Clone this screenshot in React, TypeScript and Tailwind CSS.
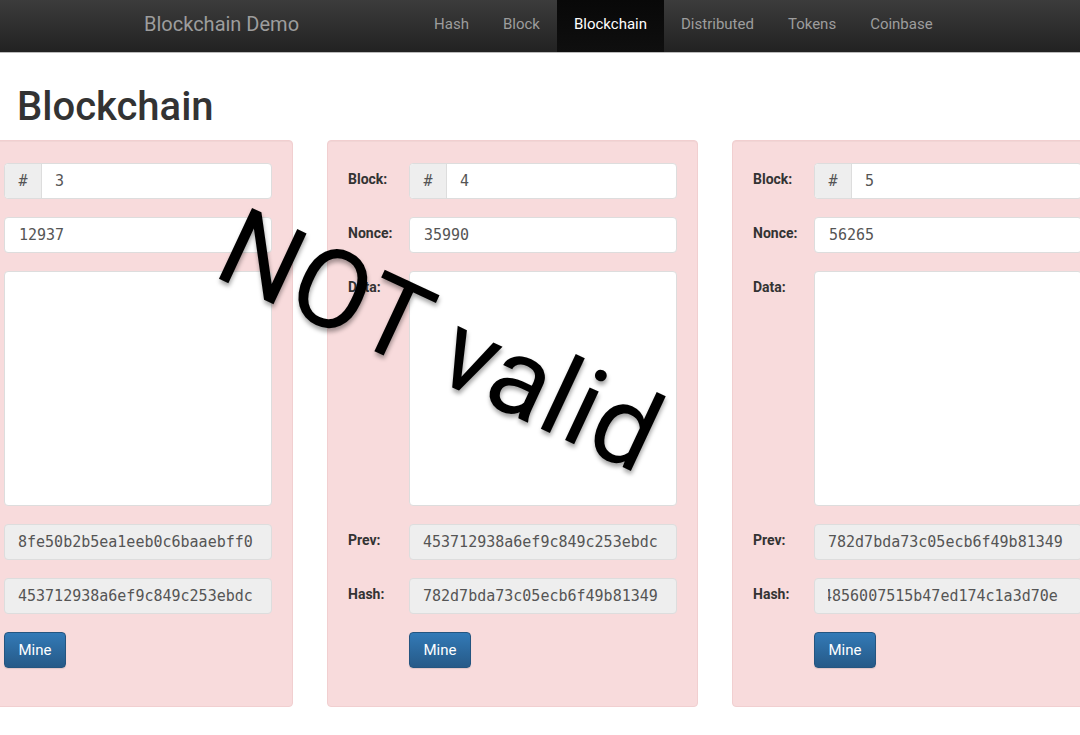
const navLinks = ["Hash", "Block", "Blockchain", "Distributed", "Tokens", "Coinbase"];

type BlockProps = {
  num: string;
  nonce: string;
  prev: string;
  hash: string;
  hashShift?: boolean;
};

const blocks: BlockProps[] = [
  { num: "3", nonce: "12937", prev: "8fe50b2b5ea1eeb0c6baaebff0", hash: "453712938a6ef9c849c253ebdc" },
  { num: "4", nonce: "35990", prev: "453712938a6ef9c849c253ebdc", hash: "782d7bda73c05ecb6f49b81349" },
  { num: "5", nonce: "56265", prev: "782d7bda73c05ecb6f49b81349", hash: "4856007515b47ed174c1a3d70e", hashShift: true },
];

const mono = "font-['DejaVu_Sans_Mono',monospace] text-[15px] text-[#555]";

const Label = ({ children }: { children: React.ReactNode }) => (
  <div className="w-[61px] shrink-0 pt-[6px] text-[14px] font-bold leading-5 text-[#333]">{children}</div>
);

const Block = ({ num, nonce, prev, hash, hashShift }: BlockProps) => (
  <div className="w-[371px] shrink-0 rounded-[4px] border border-[#f1cfd0] bg-[#f8dbdc] pl-[20px] pr-[20px] pt-[22px] pb-[38px] shadow-[inset_0_1px_1px_rgba(0,0,0,0.03)]">
    <div className="flex flex-col gap-[18px]">
      <div className="flex">
        <Label>Block:</Label>
        <div className="flex h-9 flex-1 rounded-[4px] border border-[#ddd] bg-white">
          <div className={`flex w-[37px] items-center justify-center rounded-l-[4px] border-r border-[#ddd] bg-[#eee] ${mono}`}>#</div>
          <div className={`flex items-center px-[13px] ${mono}`}>{num}</div>
        </div>
      </div>
      <div className="flex">
        <Label>Nonce:</Label>
        <div className={`flex h-9 flex-1 items-center rounded-[4px] border border-[#ddd] bg-white px-[14px] ${mono}`}>{nonce}</div>
      </div>
      <div className="flex">
        <Label>Data:</Label>
        <div className="h-[235px] flex-1 rounded-[4px] border border-[#ddd] bg-white" />
      </div>
      <div className="flex">
        <Label>Prev:</Label>
        <div className={`flex h-9 flex-1 items-center overflow-hidden whitespace-nowrap rounded-[4px] border border-[#ddd] bg-[#eee] px-[13px] ${mono}`}>{prev}</div>
      </div>
      <div className="flex">
        <Label>Hash:</Label>
        <div className={`flex h-9 min-w-0 flex-1 items-center rounded-[4px] border border-[#ddd] bg-[#eee] px-[13px] ${mono}`}>
          <div className="min-w-0 flex-1 overflow-hidden whitespace-nowrap">
            <span className={hashShift ? "-ml-[5px] inline-block" : ""}>{hash}</span>
          </div>
        </div>
      </div>
      <div className="flex">
        <div className="w-[61px] shrink-0" />
        <button className="h-9 w-[62px] rounded-[4px] border border-[#245580] bg-gradient-to-b from-[#337ab7] to-[#265a88] text-[15px] text-white shadow-[0_1px_1px_rgba(0,0,0,0.1)]">
          Mine
        </button>
      </div>
    </div>
  </div>
);

export default function App() {
  return (
    <div className="relative h-[735px] w-[1080px] overflow-hidden bg-white font-['Roboto',sans-serif]">
      <nav className="flex h-[53px] items-stretch border-b border-[#bbb] bg-gradient-to-b from-[#3c3c3c] to-[#222]">
        <div className="flex items-center pb-[4px] pl-[144px] text-[20px] text-[#9d9d9d]">Blockchain Demo</div>
        <ul className="ml-[118px] flex items-stretch text-[15px]">
          {navLinks.map((l) =>
            l === "Blockchain" ? (
              <li key={l} className="flex items-center bg-gradient-to-b from-[#080808] to-[#0f0f0f] px-[17px] pb-[4px] text-white">{l}</li>
            ) : (
              <li key={l} className="flex items-center px-[17px] pb-[4px] text-[#9d9d9d]">{l}</li>
            )
          )}
        </ul>
      </nav>

      <h1 className="pl-[17px] pt-[32px] text-[40px] font-medium leading-[44px] text-[#333]">Blockchain</h1>

      <div className="-ml-[78px] mt-[11px] flex gap-[34px]">
        {blocks.map((b) => (
          <Block key={b.num} {...b} />
        ))}
      </div>

      {/* chain-broken stamp */}
      <div className="pointer-events-none absolute left-[440px] top-[341px] -translate-x-1/2 -translate-y-1/2 rotate-[25deg] whitespace-nowrap text-[110px] leading-none text-black [text-shadow:2px_3px_4px_rgba(0,0,0,0.35)]">
        NOT valid
      </div>
    </div>
  );
}
